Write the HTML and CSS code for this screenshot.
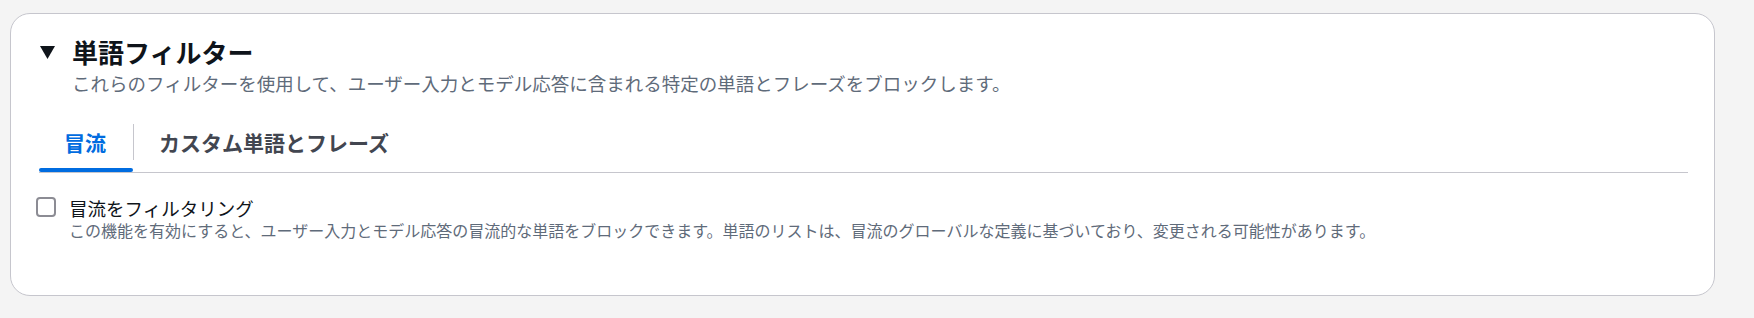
FILE: index.html
```html
<!DOCTYPE html>
<html lang="ja">
<head>
    <meta charset="UTF-8">
    <meta name="viewport" content="width=device-width, initial-scale=1.0">
    <title>単語フィルター</title>
    <link rel="stylesheet" href="styles.css">
</head>
<body>
    <div class="card">
        <div class="card-header">
            <div class="header-row">
                <svg class="caret" width="15" height="13" viewBox="0 0 15 13"><polygon points="0,0 15,0 7.5,13" fill="#0f141a"/></svg>
                <h2 class="title">単語フィルター</h2>
            </div>
            <p class="desc">これらのフィルターを使用して、ユーザー入力とモデル応答に含まれる特定の単語とフレーズをブロックします。</p>
        </div>
        <div class="tabs">
            <div class="tab active"><span class="tab-label">冒流</span></div>
            <div class="tab"><span class="tab-label last">カスタム単語とフレーズ</span></div>
        </div>
        <div class="tab-content">
            <label class="check-row">
                <span class="checkbox"></span>
                <span class="check-text">
                    <span class="check-label">冒流をフィルタリング</span>
                    <span class="check-desc">この機能を有効にすると、ユーザー入力とモデル応答の冒流的な単語をブロックできます。単語のリストは、冒流のグローバルな定義に基づいており、変更される可能性があります。</span>
                </span>
            </label>
        </div>
    </div>
</body>
</html>
```

FILE: styles.css
```css
body {
    margin: 0;
    padding: 13px 0 0 10px;
    height: 318px;
    box-sizing: border-box;
    background: #f4f4f4;
    font-family: "Noto Sans CJK JP", "Noto Sans", sans-serif;
    color: #0f141a;
}
.card {
    width: 1705px;
    height: 283px;
    box-sizing: border-box;
    background: #fff;
    border: 1px solid #c6c6cd;
    border-radius: 20px;
    padding: 22px 26px 0 28px;
}
.header-row {
    display: flex;
    align-items: center;
}
.caret {
    margin: 1px 17px 0 1px;
}
.title {
    margin: 0;
    font-size: 26px;
    line-height: 32px;
    font-weight: 700;
}
.desc {
    margin: 3px 0 0 33px;
    font-size: 18.5px;
    line-height: 24px;
    color: #5f6b7a;
}
.tabs {
    display: flex;
    margin-top: 23px;
    border-bottom: 1px solid #c6c6cd;
}
.tab {
    position: relative;
    padding: 6px 0 12px;
    font-size: 21px;
    font-weight: 700;
    color: #424650;
}
.tab-label {
    display: block;
    padding: 5px 27px 5px 25px;
    line-height: 26px;
    border-right: 1px solid #c6c6cd;
}
.tab-label.last {
    border-right: none;
}
.tab.active {
    color: #006ce0;
}
.tab.active::after {
    content: "";
    position: absolute;
    left: 0;
    right: 1px;
    bottom: 0;
    height: 4px;
    border-radius: 2px;
    background: #006ce0;
}
.tab-content {
    padding-top: 23px;
}
.check-row {
    display: flex;
    align-items: flex-start;
}
.checkbox {
    flex: none;
    width: 20px;
    height: 20px;
    box-sizing: border-box;
    border: 2px solid #8c8c94;
    border-radius: 4px;
    margin: 1px 13px 0 -3px;
}
.check-text {
    display: flex;
    flex-direction: column;
}
.check-label {
    font-size: 18.5px;
    line-height: 24px;
}
.check-desc {
    font-size: 16px;
    line-height: 21px;
    color: #5f6b7a;
}
```
